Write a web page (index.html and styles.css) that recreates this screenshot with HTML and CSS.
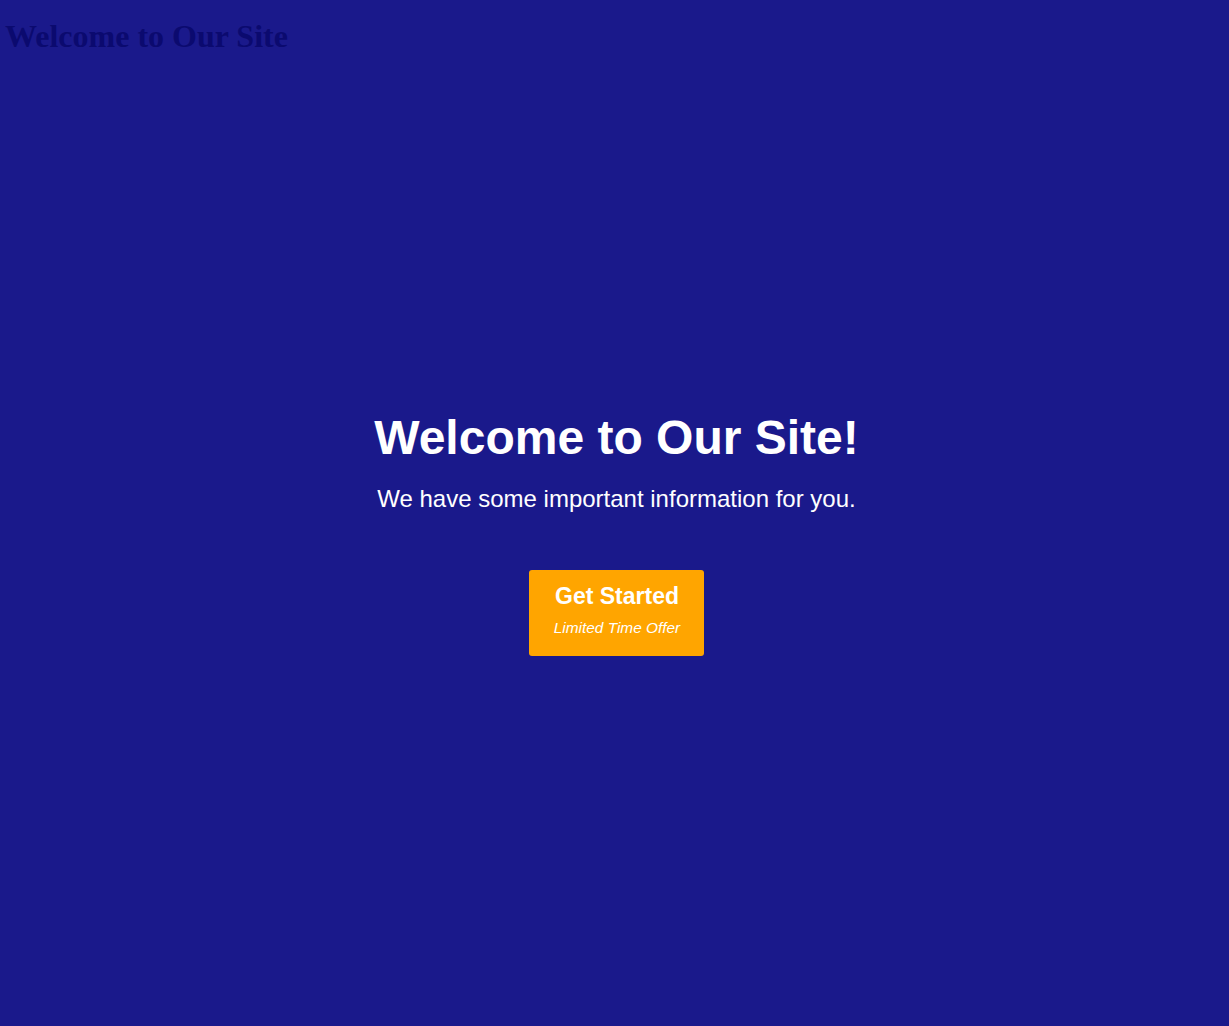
FILE: index.html
```html
<!DOCTYPE html>
<html lang="en">
<head>
<meta charset="utf-8">
<title>Welcome to Our Site</title>
<link rel="stylesheet" href="styles.css">
</head>
<body>
  <header class="site-header">
    <h1 class="site-title">Welcome to Our Site</h1>
  </header>
  <main class="hero">
    <h2 class="hero-title">Welcome to Our Site!</h2>
    <p class="hero-text">We have some important information for you.</p>
    <a class="cta" href="#">
      <span class="cta-main">Get Started</span>
      <span class="cta-sub">Limited Time Offer</span>
    </a>
  </main>
</body>
</html>
```

FILE: styles.css
```css
html, body {
  margin: 0;
  padding: 0;
  height: 100%;
}

body {
  background: #1a198b;
  display: flex;
  flex-direction: column;
  overflow: hidden;
}

.site-header {
  padding: 18px 0 0 5px;
}

.site-title {
  margin: 0;
  font-family: "Liberation Serif", "Times New Roman", serif;
  font-size: 32px;
  font-weight: bold;
  color: #0b0a6f;
}

.hero {
  flex: 1;
  display: flex;
  flex-direction: column;
  align-items: center;
  justify-content: center;
  padding: 0 0 16px 4px;
  font-family: "Liberation Sans", Arial, sans-serif;
  color: #ffffff;
  text-align: center;
}

.hero-title {
  margin: 0;
  font-size: 48px;
  font-weight: bold;
}

.hero-text {
  margin: 20px 0 0;
  font-size: 24px;
}

.cta {
  margin-top: 57px;
  display: flex;
  flex-direction: column;
  align-items: center;
  background: #ffa500;
  color: #ffffff;
  text-decoration: none;
  border-radius: 3px;
  padding: 13px 24px 19px 25px;
}

.cta-main {
  font-size: 23px;
  font-weight: bold;
}

.cta-sub {
  margin-top: 9px;
  font-size: 15.4px;
  font-style: italic;
}
```
